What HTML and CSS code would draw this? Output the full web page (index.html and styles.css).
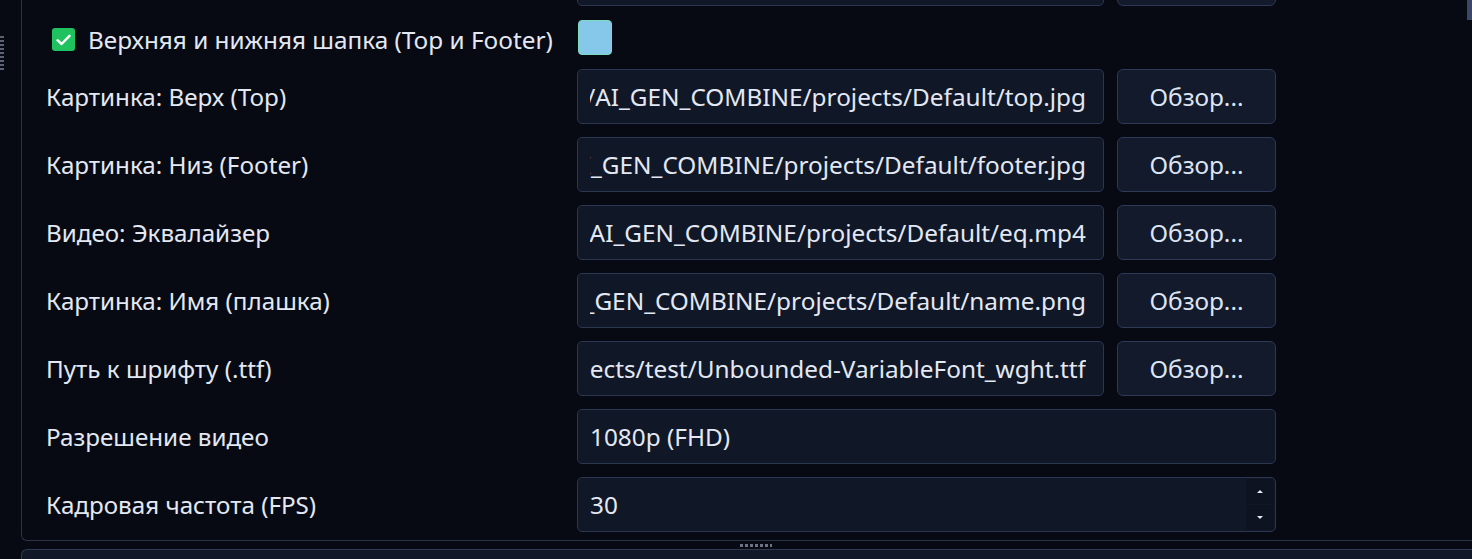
FILE: index.html
```html
<!DOCTYPE html>
<html lang="ru">
<head>
    <meta charset="utf-8">
    <title>Настройки проекта</title>
    <link rel="stylesheet" href="styles.css">
</head>
<body>
    <div class="grip"></div>
    <div class="scroll-thumb"></div>

    <div class="panel">
        <div class="form">
            <!-- previous row, scrolled up out of view -->
            <div></div>
            <div class="field"></div>
            <div class="browse"></div>

            <div class="check-row">
                <span class="checkbox">
                    <svg width="15" height="12" viewBox="0 0 15 12"><path d="M1.5 6.2 L5.6 10 L13.5 1.8" fill="none" stroke="#fff" stroke-width="2.4" stroke-linecap="round" stroke-linejoin="round"/></svg>
                </span>
                <span class="check-text">Верхняя и нижняя шапка (Top и Footer)</span>
            </div>
            <div class="swatch-cell"><span class="swatch"></span></div>
            <div></div>

            <label class="lbl">Картинка: Верх (Top)</label>
            <div class="field"><div class="val"><span>top/AI_GEN_COMBINE/projects/Default/top.jpg</span></div></div>
            <button class="browse">Обзор...</button>

            <label class="lbl">Картинка: Низ (Footer)</label>
            <div class="field"><div class="val"><span>top/AI_GEN_COMBINE/projects/Default/footer.jpg</span></div></div>
            <button class="browse">Обзор...</button>

            <label class="lbl">Видео: Эквалайзер</label>
            <div class="field"><div class="val"><span>top/AI_GEN_COMBINE/projects/Default/eq.mp4</span></div></div>
            <button class="browse">Обзор...</button>

            <label class="lbl">Картинка: Имя (плашка)</label>
            <div class="field"><div class="val"><span>top/AI_GEN_COMBINE/projects/Default/name.png</span></div></div>
            <button class="browse">Обзор...</button>

            <label class="lbl">Путь к шрифту (.ttf)</label>
            <div class="field"><div class="val"><span>NE/projects/test/Unbounded-VariableFont_wght.ttf</span></div></div>
            <button class="browse">Обзор...</button>

            <label class="lbl">Разрешение видео</label>
            <div class="field wide start"><span>1080p (FHD)</span></div>

            <label class="lbl">Кадровая частота (FPS)</label>
            <div class="field wide start spin">
                <span>30</span>
                <div class="spin-btns">
                    <div class="spin-up"><i></i></div>
                    <div class="spin-down"><i></i></div>
                </div>
            </div>
        </div>
    </div>

    <div class="splitter"><span class="dots"></span></div>
    <div class="panel-next"></div>
</body>
</html>
```

FILE: styles.css
```css
body {
    margin: 0;
    height: 559px;
    overflow: hidden;
    background-color: #070a13;
    font-family: "Noto Sans", "DejaVu Sans", sans-serif;
    color: #e3e8f2;
}

.grip {
    position: absolute;
    left: 0;
    top: 36px;
    width: 4px;
    height: 34px;
    background-image: repeating-linear-gradient(to bottom, #5b6274 0 2px, transparent 2px 4px);
}

.scroll-thumb {
    position: absolute;
    right: 0;
    top: 0;
    width: 5px;
    height: 20px;
    background-color: #3b4766;
}

.panel {
    margin-left: 21px;
    height: 541px;
    border-left: 1px solid #2a3347;
    border-bottom: 1px solid #2a3347;
    border-bottom-left-radius: 6px;
    box-sizing: border-box;
    overflow: hidden;
}

.form {
    display: grid;
    grid-template-columns: 518px 527px 159px;
    grid-template-rows: 55px 37px repeat(7, 55px);
    column-gap: 13px;
    row-gap: 13px;
    margin-top: -49px;
    padding-left: 24px;
}

.lbl {
    display: flex;
    align-items: center;
    font-size: 24.2px;
    white-space: nowrap;
}

.field {
    display: flex;
    align-items: center;
    padding: 0 17px 0 12px;
    background-color: #101727;
    border: 1px solid #2b3650;
    border-radius: 5px;
    font-size: 24.35px;
    white-space: nowrap;
    box-sizing: border-box;
}

/* long paths keep their tail visible, the head is clipped */
.val {
    flex: 1;
    display: flex;
    justify-content: flex-end;
    overflow: hidden;
}

.field.wide {
    grid-column: 2 / 4;
}

.browse {
    font-family: inherit;
    font-size: 24.4px;
    color: #dde5f4;
    background-color: #121a2c;
    border: 1px solid #2d3956;
    border-radius: 6px;
}

/* checkbox + colour swatch row */
.check-row {
    display: flex;
    align-items: center;
    padding: 4px 0 0 6px;
    gap: 13px;
}

.checkbox {
    display: flex;
    align-items: center;
    justify-content: center;
    width: 23px;
    height: 23px;
    border-radius: 3px;
    background-color: #1fc25f;
}

.check-text {
    font-size: 24.3px;
    white-space: nowrap;
}

.swatch-cell {
    display: flex;
    align-items: center;
    padding-left: 1px;
}

.swatch {
    width: 32px;
    height: 33px;
    background-color: #86c8e9;
    border: 1px solid #7ddcc0;
    border-radius: 4px;
}

/* spin box */
.spin {
    position: relative;
}

.spin-btns {
    position: absolute;
    right: 1px;
    top: 1px;
    bottom: 1px;
    width: 28px;
    display: flex;
    flex-direction: column;
    gap: 1px;
}

.spin-up,
.spin-down {
    flex: 1;
    display: flex;
    align-items: center;
    justify-content: center;
    background-color: #0d1321;
}

.spin-up i {
    border-left: 3px solid transparent;
    border-right: 3px solid transparent;
    border-bottom: 3px solid #e8ecf4;
}

.spin-down i {
    border-left: 3px solid transparent;
    border-right: 3px solid transparent;
    border-top: 3px solid #e8ecf4;
}

.splitter {
    height: 8px;
    display: flex;
    justify-content: center;
    align-items: center;
}

.dots {
    margin-left: 40px;
    width: 32px;
    height: 3px;
    background-image: repeating-linear-gradient(to right, #6b7283 0 3px, transparent 3px 5px);
}

.panel-next {
    margin-left: 21px;
    height: 40px;
    background-color: #111827;
    border-top: 1px solid #2f3a52;
    border-left: 1px solid #2f3a52;
    border-top-left-radius: 6px;
}
```
